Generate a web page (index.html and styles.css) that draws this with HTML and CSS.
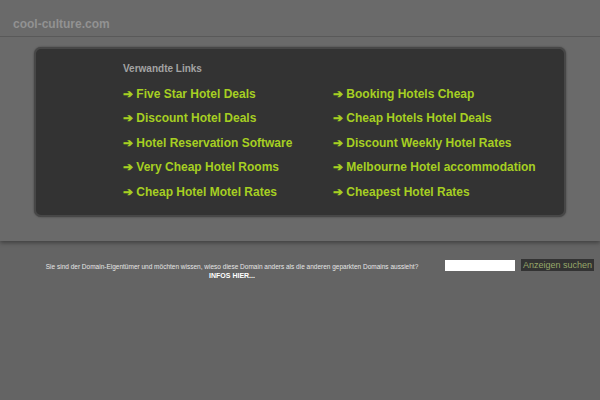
FILE: index.html
```html
<!DOCTYPE html>
<html lang="de">

<head>
    <meta charset="UTF-8">
    <meta name="viewport" content="width=device-width, initial-scale=1.0">
    <title>cool-culture.com</title>
    <link rel="stylesheet" href="styles.css">
</head>

<body>
    <div class="band">
        <div class="header">
            <span class="domain">cool-culture.com</span>
        </div>
        <div class="panel">
            <h2>Verwandte Links</h2>
            <ul class="links">
                <li><a href="#">➔ Five Star Hotel Deals</a></li>
                <li><a href="#">➔ Booking Hotels Cheap</a></li>
                <li><a href="#">➔ Discount Hotel Deals</a></li>
                <li><a href="#">➔ Cheap Hotels Hotel Deals</a></li>
                <li><a href="#">➔ Hotel Reservation Software</a></li>
                <li><a href="#">➔ Discount Weekly Hotel Rates</a></li>
                <li><a href="#">➔ Very Cheap Hotel Rooms</a></li>
                <li><a href="#">➔ Melbourne Hotel accommodation</a></li>
                <li><a href="#">➔ Cheap Hotel Motel Rates</a></li>
                <li><a href="#">➔ Cheapest Hotel Rates</a></li>
            </ul>
        </div>
    </div>

    <div class="footer">
        <div class="owner">
            <p>Sie sind der Domain-Eigentümer und möchten wissen, wieso diese Domain anders als die anderen geparkten Domains aussieht?</p>
            <a href="#">INFOS HIER...</a>
        </div>
        <form class="search">
            <input type="text" name="q">
            <button type="button">Anzeigen suchen</button>
        </form>
    </div>
</body>

</html>
```

FILE: styles.css
```css
* {
    box-sizing: border-box;
}
body {
    margin: 0;
    background: #646464;
    font-family: "Liberation Sans", Arial, sans-serif;
}
.band {
    background: #6a6a6a;
    height: 241px;
    box-shadow: 0 2px 4px rgba(0, 0, 0, .35);
}
.header {
    height: 37px;
    border-bottom: 1px solid #595959;
    padding: 14px 0 0 13px;
}
.domain {
    color: #929292;
    font-size: 12px;
    font-weight: bold;
}
.panel {
    margin: 10px 0 0 34px;
    width: 532px;
    height: 170px;
    background: #333;
    border: 2px solid #474747;
    border-radius: 7px;
    box-shadow: 0 0 2px rgba(0, 0, 0, .4);
    padding: 14px 0 0 87px;
}
.panel h2 {
    margin: 0 0 7px;
    font-size: 10px;
    color: #a3a3a3;
    font-weight: bold;
}
.links {
    list-style: none;
    margin: 0;
    padding: 0;
    display: grid;
    grid-template-columns: 210px 210px;
    grid-auto-rows: 24.4px;
}
.links li {
    white-space: nowrap;
    height: 24.4px;
    line-height: 24px;
    overflow: visible;
}
.links a {
    color: #a6cf22;
    font-size: 12px;
    font-weight: bold;
    text-decoration: none;
}
.footer {
    display: flex;
    align-items: flex-start;
    padding: 18px 0 0 0;
}
.owner {
    width: 464px;
    text-align: center;
    font-size: 6.5px;
    color: #e6e6e6;
}
.owner p {
    margin: 4px 0 2px;
}
.owner a {
    color: #fff;
    font-weight: bold;
    font-size: 7px;
    text-decoration: none;
}
.search {
    display: flex;
    gap: 6px;
    margin-left: -19px;
}
.search input {
    width: 70px;
    height: 11px;
    border: none;
    margin-top: 1px;
    background: #fff;
}
.search button {
    background: #333;
    border: none;
    color: #97a86a;
    font-family: "Liberation Sans", Arial, sans-serif;
    font-size: 9px;
    white-space: nowrap;
    padding: 0;
    height: 12px;
    width: 73px;
}
```
